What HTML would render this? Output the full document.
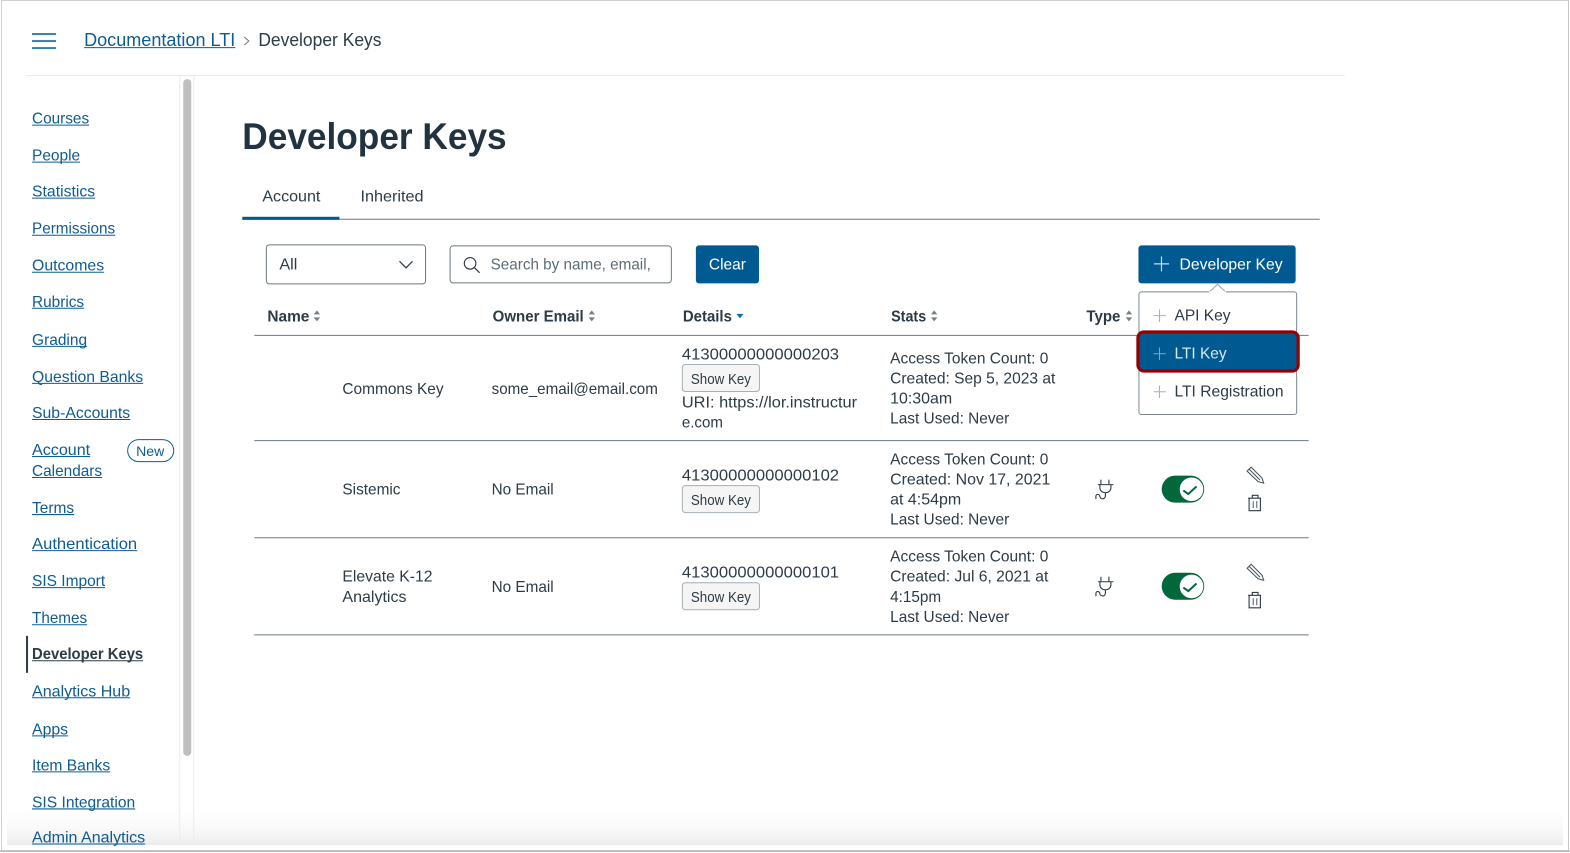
<!DOCTYPE html>
<html lang="en"><head><meta charset="utf-8"><title>Developer Keys</title>
<style>
html,body{margin:0;padding:0;background:#fff;width:1570px;height:853px;overflow:hidden}
svg{display:block}
text{font-family:"Liberation Sans",sans-serif;font-size:16px;fill:#2D3B45}
.l{fill:#0E5C92;font-size:15.5px}
.u{stroke:#0E5C92;stroke-width:1}
.l,.u,.s,.t{transform:translateY(-.6px)}
.h{font-weight:bold;font-size:16px}
.w{fill:#fff}
.s{font-size:14.5px}
.ic{fill:none;stroke:#2D3B45;stroke-width:1.1}
.sort{fill:#75818a}
</style></head><body>
<svg width="1570" height="853" viewBox="0 0 1568 851.900" xmlns="http://www.w3.org/2000/svg">
<defs><linearGradient id="g" x1="0" y1="0" x2="0" y2="1"><stop offset="0" stop-color="#fff" stop-opacity="0"/><stop offset="1" stop-color="#ececec"/></linearGradient></defs>
<rect width="1570" height="853" fill="#fff"/>
<!-- bottom fade -->
<rect x="7" y="805" width="1554" height="39" fill="url(#g)"/>
<!-- frame -->
<rect x="1.500" y="0.500" width="1565" height="849" fill="none" stroke="#d0d0d0"/>
<line x1="0" y1="850" x2="1570" y2="850" stroke="#b4b4b4" stroke-width="1.500"/>
<line x1="1566.500" y1="0" x2="1566.500" y2="850" stroke="#c4c4c4"/>
<!-- header -->
<g fill="#3b7fa9"><rect x="32" y="33" width="24" height="2"/><rect x="32" y="40" width="24" height="2"/><rect x="32" y="47" width="24" height="2"/></g>
<text x="84" y="46" textLength="151" lengthAdjust="spacingAndGlyphs" style="font-size:18px;fill:#0E5C92">Documentation LTI</text>
<line x1="84" y1="47.500" x2="235" y2="47.500" stroke="#0E5C92"/>
<path d="M244 37l4.500 4-4.500 4" fill="none" stroke="#6b7780"/>
<text x="258" y="46" textLength="123" lengthAdjust="spacingAndGlyphs" style="font-size:18px">Developer Keys</text>
<line x1="26" y1="75.500" x2="1343" y2="75.500" stroke="#e8e8e8"/>
<!-- sidebar dividers + scrollbar -->
<line x1="179.500" y1="76" x2="179.500" y2="844" stroke="#ececec"/>
<line x1="193.500" y1="76" x2="193.500" y2="844" stroke="#ececec"/>
<rect x="183" y="79" width="8" height="676" rx="4" fill="#bfbfbf"/>
<!-- sidebar links -->
<text class="l" x="32" y="124" textLength="57" lengthAdjust="spacingAndGlyphs">Courses</text><line class="u" x1="32" x2="89" y1="125.500" y2="125.500"/>
<text class="l" x="32" y="161" textLength="48" lengthAdjust="spacingAndGlyphs">People</text><line class="u" x1="32" x2="80" y1="162.500" y2="162.500"/>
<text class="l" x="32" y="197" textLength="63" lengthAdjust="spacingAndGlyphs">Statistics</text><line class="u" x1="32" x2="95" y1="198.500" y2="198.500"/>
<text class="l" x="32" y="234" textLength="83" lengthAdjust="spacingAndGlyphs">Permissions</text><line class="u" x1="32" x2="115" y1="235.500" y2="235.500"/>
<text class="l" x="32" y="271" textLength="72" lengthAdjust="spacingAndGlyphs">Outcomes</text><line class="u" x1="32" x2="104" y1="272.500" y2="272.500"/>
<text class="l" x="32" y="307" textLength="52" lengthAdjust="spacingAndGlyphs">Rubrics</text><line class="u" x1="32" x2="84" y1="308.500" y2="308.500"/>
<text class="l" x="32" y="345" textLength="55" lengthAdjust="spacingAndGlyphs">Grading</text><line class="u" x1="32" x2="87" y1="346.500" y2="346.500"/>
<text class="l" x="32" y="382" textLength="111" lengthAdjust="spacingAndGlyphs">Question Banks</text><line class="u" x1="32" x2="143" y1="383.500" y2="383.500"/>
<text class="l" x="32" y="418" textLength="98" lengthAdjust="spacingAndGlyphs">Sub-Accounts</text><line class="u" x1="32" x2="130" y1="419.500" y2="419.500"/>
<text class="l" x="32" y="455" textLength="58" lengthAdjust="spacingAndGlyphs">Account</text><line class="u" x1="32" x2="90" y1="456.500" y2="456.500"/>
<text class="l" x="32" y="476" textLength="70" lengthAdjust="spacingAndGlyphs">Calendars</text><line class="u" x1="32" x2="102" y1="477.500" y2="477.500"/>
<rect x="127.500" y="439" width="46" height="22" rx="11" fill="#fff" stroke="#0E5C92"/>
<text class="t" x="136" y="456" textLength="28" lengthAdjust="spacingAndGlyphs" style="font-size:14px;fill:#0E5C92">New</text>
<text class="l" x="32" y="513" textLength="42" lengthAdjust="spacingAndGlyphs">Terms</text><line class="u" x1="32" x2="74" y1="514.500" y2="514.500"/>
<text class="l" x="32" y="549" textLength="105" lengthAdjust="spacingAndGlyphs">Authentication</text><line class="u" x1="32" x2="137" y1="550.500" y2="550.500"/>
<text class="l" x="32" y="586" textLength="73" lengthAdjust="spacingAndGlyphs">SIS Import</text><line class="u" x1="32" x2="105" y1="587.500" y2="587.500"/>
<text class="l" x="32" y="623" textLength="55" lengthAdjust="spacingAndGlyphs">Themes</text><line class="u" x1="32" x2="87" y1="624.500" y2="624.500"/>
<rect x="26" y="635" width="2" height="37" fill="#2D3B45"/>
<text class="t" x="32" y="659" textLength="111" lengthAdjust="spacingAndGlyphs" style="font-size:15.500px;font-weight:bold">Developer Keys</text><line class="t" x1="32" x2="143" y1="660.500" y2="660.500" stroke="#2D3B45"/>
<text class="l" x="32" y="696" textLength="98" lengthAdjust="spacingAndGlyphs">Analytics Hub</text><line class="u" x1="32" x2="130" y1="697.500" y2="697.500"/>
<text class="l" x="32" y="734" textLength="36" lengthAdjust="spacingAndGlyphs">Apps</text><line class="u" x1="32" x2="68" y1="735.500" y2="735.500"/>
<text class="l" x="32" y="770" textLength="78" lengthAdjust="spacingAndGlyphs">Item Banks</text><line class="u" x1="32" x2="110" y1="771.500" y2="771.500"/>
<text class="l" x="32" y="807" textLength="103" lengthAdjust="spacingAndGlyphs">SIS Integration</text><line class="u" x1="32" x2="135" y1="808.500" y2="808.500"/>
<text class="l" x="32" y="842" textLength="113" lengthAdjust="spacingAndGlyphs">Admin Analytics</text><line class="u" x1="32" x2="145" y1="843.500" y2="843.500"/>
<!-- title / tabs -->
<text x="242" y="149" textLength="264" lengthAdjust="spacingAndGlyphs" style="font-size:37px;font-weight:bold;fill:#22323f">Developer Keys</text>
<text class="t" x="262" y="202" textLength="58" lengthAdjust="spacingAndGlyphs">Account</text>
<text class="t" x="360" y="202" textLength="63" lengthAdjust="spacingAndGlyphs">Inherited</text>
<line x1="242" y1="219" x2="1318" y2="219" stroke="#6b7780"/>
<rect x="242" y="216.500" width="97" height="3" fill="#005A92"/>
<!-- filters -->
<rect x="266" y="244.500" width="159" height="39" rx="3" fill="#fff" stroke="#6b7780"/>
<text class="t" x="279" y="270" textLength="18" lengthAdjust="spacingAndGlyphs">All</text>
<path d="M399 261l6.500 6.500 6.500-6.500" fill="none" stroke="#2D3B45" stroke-width="1.200"/>
<rect x="449.500" y="245.500" width="221" height="37" rx="3" fill="#fff" stroke="#6b7780"/>
<circle cx="469.500" cy="263" r="5.800" fill="none" stroke="#2D3B45" stroke-width="1.100"/><path d="M474 267.500l5 5" stroke="#2D3B45" stroke-width="1.200"/>
<text class="t" x="490" y="270" textLength="160" lengthAdjust="spacingAndGlyphs" style="fill:#5f6c75">Search by name, email,</text>
<rect x="695" y="245" width="63" height="38" rx="3" fill="#005A92"/>
<text class="w t" x="708" y="270" textLength="37" lengthAdjust="spacingAndGlyphs">Clear</text>
<rect x="1137" y="245" width="157" height="38" rx="3" fill="#005A92"/>
<path d="M1160 256v15M1152.500 263.500h15" stroke="#c9dbe8" stroke-width="1.200"/>
<text class="w t" x="1178" y="270" textLength="103" lengthAdjust="spacingAndGlyphs">Developer Key</text>
<!-- headers -->
<text class="h" x="267" y="321" textLength="42" lengthAdjust="spacingAndGlyphs">Name</text>
<path class="sort" d="M316.500 310l3.200 4h-6.400zM316.500 321l3.200-4h-6.400z"/>
<text class="h" x="492" y="321" textLength="91" lengthAdjust="spacingAndGlyphs">Owner Email</text>
<path class="sort" d="M591 310l3.200 4h-6.400zM591 321l3.200-4h-6.400z"/>
<text class="h" x="682" y="321" textLength="49" lengthAdjust="spacingAndGlyphs">Details</text>
<path fill="#0E6FA8" d="M735.500 313.500h7l-3.500 4.500z"/>
<text class="h" x="890" y="321" textLength="35" lengthAdjust="spacingAndGlyphs">Stats</text>
<path class="sort" d="M933 310l3.200 4h-6.400zM933 321l3.200-4h-6.400z"/>
<text class="h" x="1085" y="321" textLength="34" lengthAdjust="spacingAndGlyphs">Type</text>
<path class="sort" d="M1127.500 310l3.200 4h-6.400zM1127.500 321l3.200-4h-6.400z"/>
<!-- table lines -->
<line x1="254" y1="335" x2="1307" y2="335" stroke="#6b7780"/>
<line x1="254" y1="440" x2="1307" y2="440" stroke="#6b7780"/>
<line x1="254" y1="537" x2="1307" y2="537" stroke="#6b7780"/>
<line x1="254" y1="634" x2="1307" y2="634" stroke="#6b7780"/>
<!-- row 1 -->
<text class="t" x="342" y="394" textLength="101" lengthAdjust="spacingAndGlyphs">Commons Key</text>
<text class="t" x="491" y="394" textLength="166" lengthAdjust="spacingAndGlyphs">some_email@email.com</text>
<text x="681" y="359" textLength="157" lengthAdjust="spacingAndGlyphs">41300000000000203</text>
<rect x="681.500" y="364" width="77" height="27" rx="3" fill="#f5f5f5" stroke="#a5afb5"/>
<text class="s" x="690" y="384" textLength="60" lengthAdjust="spacingAndGlyphs">Show Key</text>
<text x="681" y="407" textLength="175" lengthAdjust="spacingAndGlyphs">URI: https://lor.instructur</text>
<text x="681" y="427" textLength="41" lengthAdjust="spacingAndGlyphs">e.com</text>
<text x="889" y="363" textLength="158" lengthAdjust="spacingAndGlyphs">Access Token Count: 0</text>
<text x="889" y="383" textLength="165" lengthAdjust="spacingAndGlyphs">Created: Sep 5, 2023 at</text>
<text x="889" y="403" textLength="62" lengthAdjust="spacingAndGlyphs">10:30am</text>
<text x="889" y="423" textLength="119" lengthAdjust="spacingAndGlyphs">Last Used: Never</text>
<!-- row 2 -->
<text x="342" y="494" textLength="58" lengthAdjust="spacingAndGlyphs">Sistemic</text>
<text x="491" y="494" textLength="62" lengthAdjust="spacingAndGlyphs">No Email</text>
<text x="681" y="480" textLength="157" lengthAdjust="spacingAndGlyphs">41300000000000102</text>
<rect x="681.500" y="485" width="77" height="27" rx="3" fill="#f5f5f5" stroke="#a5afb5"/>
<text class="s" x="690" y="505" textLength="60" lengthAdjust="spacingAndGlyphs">Show Key</text>
<text x="889" y="464" textLength="158" lengthAdjust="spacingAndGlyphs">Access Token Count: 0</text>
<text x="889" y="484" textLength="160" lengthAdjust="spacingAndGlyphs">Created: Nov 17, 2021</text>
<text x="889" y="504" textLength="71" lengthAdjust="spacingAndGlyphs">at 4:54pm</text>
<text x="889" y="524" textLength="119" lengthAdjust="spacingAndGlyphs">Last Used: Never</text>
<!-- row 3 -->
<text x="342" y="581" textLength="90" lengthAdjust="spacingAndGlyphs">Elevate K-12</text>
<text x="342" y="601" textLength="64" lengthAdjust="spacingAndGlyphs">Analytics</text>
<text x="491" y="591" textLength="62" lengthAdjust="spacingAndGlyphs">No Email</text>
<text x="681" y="577" textLength="157" lengthAdjust="spacingAndGlyphs">41300000000000101</text>
<rect x="681.500" y="582" width="77" height="27" rx="3" fill="#f5f5f5" stroke="#a5afb5"/>
<text class="s" x="690" y="602" textLength="60" lengthAdjust="spacingAndGlyphs">Show Key</text>
<text x="889" y="561" textLength="158" lengthAdjust="spacingAndGlyphs">Access Token Count: 0</text>
<text x="889" y="581" textLength="158" lengthAdjust="spacingAndGlyphs">Created: Jul 6, 2021 at</text>
<text x="889" y="601" textLength="51" lengthAdjust="spacingAndGlyphs">4:15pm</text>
<text x="889" y="621" textLength="119" lengthAdjust="spacingAndGlyphs">Last Used: Never</text>
<!-- row icons: row 2 -->
<g>
<path class="ic" d="M1099.500 479v5M1107.500 479v5M1096.500 484h15.500M1098.500 484.500v2.500a5 5 0 0 0 5 5h1a5 5 0 0 0 5-5v-2.500M1104 492v3c0 4-5 4-5.500 1s-4-3-4 0v2.500"/>
<rect x="1160.200" y="475" width="42.500" height="27" rx="13.500" fill="#03673C"/>
<circle cx="1190" cy="488.700" r="11.800" fill="#fff"/>
<path d="M1181.800 489.800l5 3.500 8.200-7.500" fill="none" stroke="#03673C" stroke-width="2"/>
<path class="ic" stroke-width="1" d="M1245.500 470.500l4-4 11 11 1.500 5-5.500-1.500zM1247.500 468.500l11 11" style="stroke:#4a5760"/>
<path class="ic" d="M1246.500 497.500h13M1250.700 497.500v-2.800h5.700v2.800M1247.500 497.500v12.500h11.300v-12.500"/>
<path d="M1251.700 500.500v7M1255.100 500.500v7" stroke="#7d8890" stroke-width="1.400"/>
</g>
<!-- row icons: row 3 -->
<g transform="translate(0 97)">
<path class="ic" d="M1099.500 479v5M1107.500 479v5M1096.500 484h15.500M1098.500 484.500v2.500a5 5 0 0 0 5 5h1a5 5 0 0 0 5-5v-2.500M1104 492v3c0 4-5 4-5.500 1s-4-3-4 0v2.500"/>
<rect x="1160.200" y="475" width="42.500" height="27" rx="13.500" fill="#03673C"/>
<circle cx="1190" cy="488.700" r="11.800" fill="#fff"/>
<path d="M1181.800 489.800l5 3.500 8.200-7.500" fill="none" stroke="#03673C" stroke-width="2"/>
<path class="ic" d="M1245.500 470.500l4-4 11 11 1.500 5-5.500-1.500zM1247.500 468.500l11 11" style="stroke:#4a5760"/>
<path class="ic" d="M1246.500 497.500h13M1250.700 497.500v-2.800h5.700v2.800M1247.500 497.500v12.500h11.300v-12.500"/>
<path d="M1251.700 500.500v7M1255.100 500.500v7" stroke="#7d8890" stroke-width="1.400"/>
</g>
<!-- dropdown -->
<rect x="1137.500" y="291.500" width="157.500" height="122.500" rx="2.500" fill="#fff" stroke="#7b8790"/>
<path d="M1208 291.500l8-7.500 8 7.500" fill="#fff" stroke="#9aa5ac"/>
<rect x="1207.500" y="291" width="17" height="2" fill="#fff"/>
<path d="M1158 309v12.500M1152 315.250h12.500" stroke="#a8b1b7"/>
<text x="1173" y="320" textLength="56" lengthAdjust="spacingAndGlyphs">API Key</text>
<rect x="1136.500" y="331.500" width="160" height="39" rx="6" fill="#005A92" stroke="#960000" stroke-width="3.200"/>
<path d="M1158 347v12.500M1152 353.250h12.500" stroke="#7ea7c3"/>
<text class="w" x="1173" y="358" textLength="52" lengthAdjust="spacingAndGlyphs" style="fill:#dbe6ee">LTI Key</text>
<path d="M1158 385v12.500M1152 391.250h12.500" stroke="#a8b1b7"/>
<text x="1173" y="396" textLength="109" lengthAdjust="spacingAndGlyphs">LTI Registration</text>
</svg>
</body></html>
